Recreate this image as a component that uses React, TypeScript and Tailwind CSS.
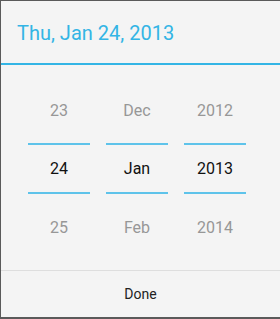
const days = ['23', '24', '25'];
const months = ['Dec', 'Jan', 'Feb'];
const years = ['2012', '2013', '2014'];

function Column({ items }: { items: string[] }) {
  return (
    <div className="w-[62px] flex flex-col items-center">
      <div className="h-[58px] pb-[6px] flex items-center justify-center text-[16px] text-[#979797]">{items[0]}</div>
      <div className="w-full h-[2px] bg-[#5ec3ea]" />
      <div className="h-[47px] flex items-center justify-center text-[16px] text-[#111]">{items[1]}</div>
      <div className="w-full h-[2px] bg-[#5ec3ea]" />
      <div className="h-[68px] flex items-center justify-center text-[16px] text-[#979797]">{items[2]}</div>
    </div>
  );
}

export default function App() {
  return (
    <div className="w-[280px] h-[319px] bg-[#f4f4f4] border-l border-t border-b-2 border-[#5a5a5a] flex flex-col font-['Roboto',sans-serif]">
      {/* header */}
      <div className="h-[62px] flex items-center pl-[16px] pt-[2px] text-[20px] text-[#33b5e5]">
        Thu, Jan 24, 2013
      </div>
      <div className="h-[2px] bg-[#33b5e5]" />

      {/* picker */}
      <div className="flex gap-[16px] pt-[20px] pl-[27px]">
        <Column items={days} />
        <Column items={months} />
        <Column items={years} />
      </div>

      {/* footer */}
      <div className="mt-auto border-t border-[#dedede] h-[47px] flex items-center justify-center text-[14px] text-[#222]">
        Done
      </div>
    </div>
  );
}
